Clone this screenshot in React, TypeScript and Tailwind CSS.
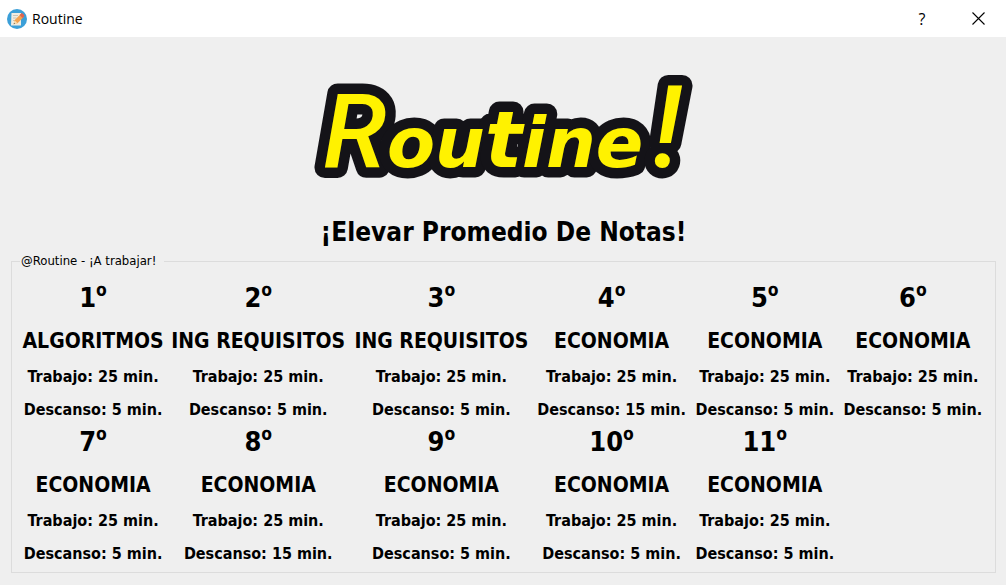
type Task = { id: number; subject: string; work: number; rest: number };

const tasks: Task[] = [
  { id: 1, subject: "ALGORITMOS", work: 25, rest: 5 },
  { id: 2, subject: "ING REQUISITOS", work: 25, rest: 5 },
  { id: 3, subject: "ING REQUISITOS", work: 25, rest: 5 },
  { id: 4, subject: "ECONOMIA", work: 25, rest: 15 },
  { id: 5, subject: "ECONOMIA", work: 25, rest: 5 },
  { id: 6, subject: "ECONOMIA", work: 25, rest: 5 },
  { id: 7, subject: "ECONOMIA", work: 25, rest: 5 },
  { id: 8, subject: "ECONOMIA", work: 25, rest: 15 },
  { id: 9, subject: "ECONOMIA", work: 25, rest: 5 },
  { id: 10, subject: "ECONOMIA", work: 25, rest: 5 },
  { id: 11, subject: "ECONOMIA", work: 25, rest: 5 },
];

function AppIcon() {
  return (
    <svg width="20" height="20" viewBox="0 0 20 20" aria-hidden="true">
      <circle cx="10" cy="10" r="10" fill="#3b9fd8" />
      <path d="M4.500 4h9.500v12.500H4z" fill="#f1ece0" />
      <path d="M6 6.500h5M6 9h3.500M6 11.500h2" stroke="#c9c4b8" strokeWidth="1" />
      <path d="M7.500 11.200l6-6 3 3-6 6-3.800 1z" fill="#f4a34f" />
      <path d="M12.600 6.100l1.400-1.500c.6-.6 1.100-.6 1.700 0l1.300 1.300c.5.6.5 1.100 0 1.600l-1.500 1.500z" fill="#e06450" />
      <path d="M7.500 11.200l3 3-3.800 1z" fill="#f8dfb4" />
      <path d="M7 13.800l1 1-1.300.4z" fill="#4a4a4a" />
    </svg>
  );
}

/* The dark halo reuses the wordmark, so every letter's fill stays above it. */
function Logo() {
  return (
    <svg
      width="380"
      height="106"
      viewBox="0 0 380 106"
      role="img"
      aria-label="Routine!"
      className="overflow-visible font-['DejaVu_Sans'] italic"
    >
      <use href="#wordmark" stroke="#141318" strokeWidth="21" strokeLinejoin="round" />
      <text id="wordmark" y="93" fill="#fff200">
        <tspan x="9" fontSize="104" className="font-['Roboto'] font-medium">R</tspan>
        <tspan x="73" fontSize="70" className="font-bold">ou</tspan>
        <tspan x="171" fontSize="78" className="font-bold">t</tspan>
        <tspan x="208" fontSize="70" className="font-bold">ine</tspan>
        <tspan x="338" fontSize="114" className="font-['Roboto'] font-medium">!</tspan>
      </text>
    </svg>
  );
}

function TaskCell({ task }: { task: Task }) {
  return (
    <li className="flex flex-col items-center font-bold whitespace-nowrap">
      <h2 className="mb-[9px] h-9 text-[27px] leading-9">
        {task.id}
        <span className="font-['Noto_Sans',sans-serif] text-[28px] leading-none">º</span>
      </h2>
      <h3 className="mb-1.5 text-[21px] leading-8">{task.subject}</h3>
      <p className="mb-[5px] text-[16px] leading-7">Trabajo: {task.work} min.</p>
      <p className="text-[16px] leading-7">Descanso: {task.rest} min.</p>
    </li>
  );
}

export default function App() {
  return (
    <div className="flex min-h-screen flex-col bg-[#efefef] font-['DejaVu_Sans_Condensed','DejaVu_Sans',sans-serif] text-black">
      <header className="flex h-[37px] items-center bg-white pl-[7px]">
        <AppIcon />
        <span className="ml-[5px] flex-1 font-['Open_Sans',sans-serif] text-[14px]">Routine</span>
        <button type="button" aria-label="Ayuda" className="h-full w-14 font-['Open_Sans',sans-serif] text-[16px]">
          ?
        </button>
        <button type="button" aria-label="Cerrar" className="flex h-full w-14 items-center justify-center">
          <svg width="13" height="13" viewBox="0 0 13 13" aria-hidden="true">
            <path d="M.5.5l12 12M12.5.5l-12 12" stroke="#000" strokeWidth="1.1" />
          </svg>
        </button>
      </header>
      <main className="flex flex-1 flex-col pt-[37px] pr-2.5 pb-3 pl-[11px]">
        <h1 className="flex justify-center">
          <Logo />
        </h1>
        <p className="mt-[34px] text-center text-[26px] leading-9 font-bold">¡Elevar Promedio De Notas!</p>
        <fieldset className="mt-[3px] flex-1 border border-[#dcdcdc] px-2">
          <legend className="pr-2 pl-px text-[13px] leading-4">@Routine - ¡A trabajar!</legend>
          <ol className="mt-[11px] grid grid-cols-[146fr_184fr_182fr_158fr_148fr_148fr]">
            {tasks.map((task) => (
              <TaskCell key={task.id} task={task} />
            ))}
          </ol>
        </fieldset>
      </main>
    </div>
  );
}
